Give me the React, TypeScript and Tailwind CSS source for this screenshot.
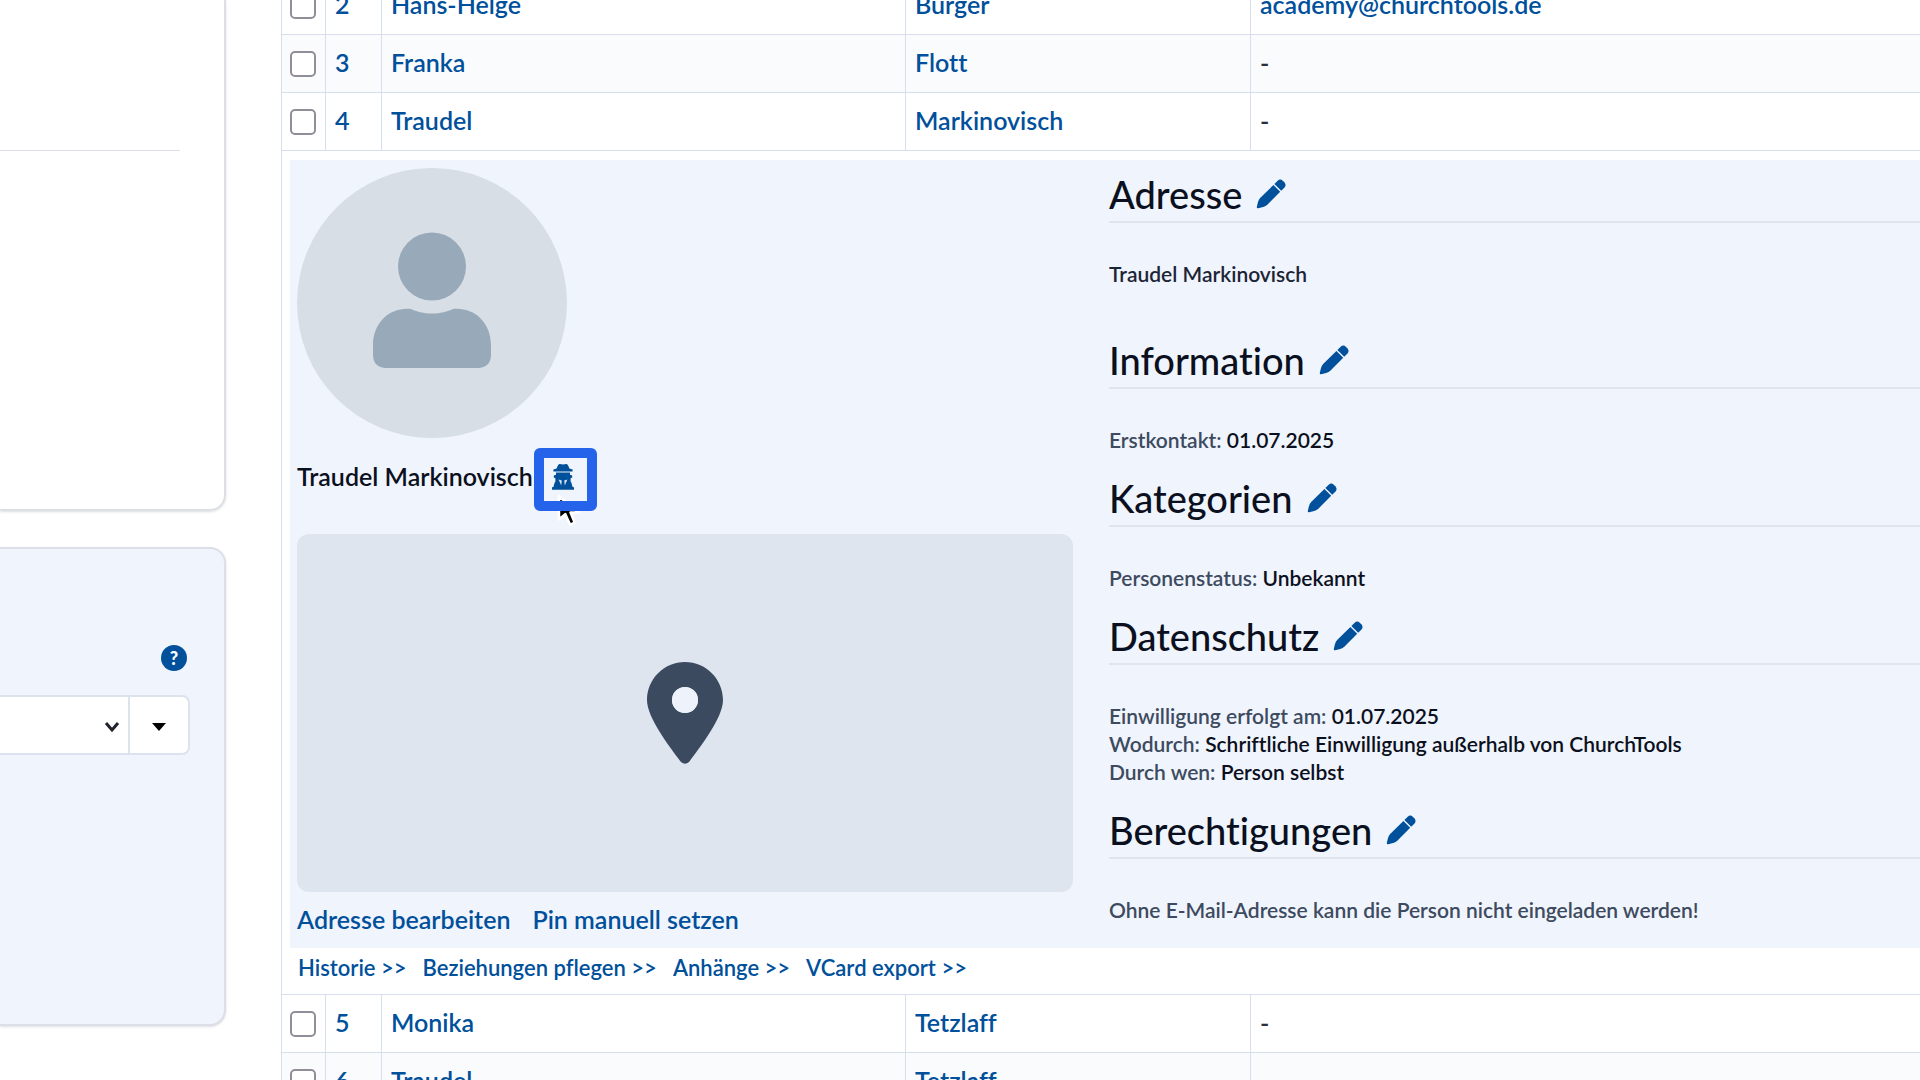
import type { ReactNode } from 'react'

type Person = { nr: number; first: string; last: string; mail: string; striped?: boolean }

const before: Person[] = [
  { nr: 2, first: 'Hans-Helge', last: 'Burger', mail: 'academy@churchtools.de' },
  { nr: 3, first: 'Franka', last: 'Flott', mail: '-', striped: true },
  { nr: 4, first: 'Traudel', last: 'Markinovisch', mail: '-' },
]

const after: Person[] = [
  { nr: 5, first: 'Monika', last: 'Tetzlaff', mail: '-' },
  { nr: 6, first: 'Traudel', last: 'Tetzlaff', mail: '-', striped: true },
]

function PencilIcon() {
  return (
    <svg viewBox="0 0 30 30" className="size-[30px]" fill="#00509b" aria-hidden="true">
      <path d="M17.4 6 24.2 12.800 11.800 25.300Q9.800 27.200 7.200 28L2.200 29.300Q.6 29.600.8 28L2 23Q2.600 20.600 4.400 18.800Z" />
      <path d="M18.400 5 21.700 1.700Q24.300-.6 27 1.900L28.300 3.200Q30.700 5.900 28.500 8.400L25.200 11.800Z" />
    </svg>
  )
}

function SpyIcon() {
  return (
    <svg viewBox="0 0 24 28" className="h-7 w-6" aria-hidden="true">
      <g fill="#00509b">
        <path d="M8 1.2C9 .6 10.600 1.500 12 1.500S15 .6 16 1.200C17.200 1.900 18 4.400 18.400 5.600L21.600 6.600V8.400H2.400V6.600L5.600 5.600C6 4.400 6.800 1.900 8 1.200Z" />
        <path d="M5 9.400H19V11.800L21.200 12.600V14.600L19.600 15.200V18.600C20.600 20 21 21.600 21.300 23.400L23 24.600V26.800H1V24.600L2.700 23.400C3 21.600 3.400 20 4.400 18.600V15.200L2.800 14.600V12.600L5 11.800Z" />
      </g>
      <path d="M7.600 16.500 10.800 17.500 10.200 22.500ZM16.400 16.500 13.200 17.500 13.800 22.500Z" fill="#d5e6f8" />
    </svg>
  )
}

function Rows({ people }: { people: Person[] }) {
  return (
    <>
      {people.map((p) => (
        <tr key={p.nr} className={`h-[58px] text-[25px] leading-8 ${p.striped ? 'bg-[#fafbfd]' : 'bg-white'}`}>
          <td className="border border-[#d8dfec] pl-2">
            <input
              type="checkbox"
              aria-label={`${p.first} ${p.last}`}
              className="block size-[26px] appearance-none rounded-[5px] border-2 border-[#918e99] bg-white checked:bg-[#00509b]"
            />
          </td>
          <td className="border border-[#d8dfec] pb-[3px] pl-[9px]"><a href="#">{p.nr}</a></td>
          <td className="border border-[#d8dfec] pb-[3px] pl-[9px]"><a href="#">{p.first}</a></td>
          <td className="border border-[#d8dfec] pb-[3px] pl-[9px]"><a href="#">{p.last}</a></td>
          <td className="border border-r-0 border-[#d8dfec] pb-[3px] pl-[9px]">
            {p.mail === '-' ? <span className="text-[#2b2f3a]">-</span> : <a href="#">{p.mail}</a>}
          </td>
        </tr>
      ))}
    </>
  )
}

function Section({ title, children }: { title: string; children: ReactNode }) {
  return (
    <section>
      <h2 className="flex h-14 items-center gap-[14px] border-b-2 border-[#dfe4ee] text-[38px] font-medium text-[#0b1020]">
        {title}
        <button type="button" aria-label={`${title} bearbeiten`}>
          <PencilIcon />
        </button>
      </h2>
      <div className="pt-[37px] pb-[17px] text-[21px] leading-7 text-[#3d4a5f]">{children}</div>
    </section>
  )
}

function Field({ label, value }: { label: string; value: string }) {
  return (
    <p>
      {label}: <span className="text-[#0b1020]">{value}</span>
    </p>
  )
}

function Sidebar() {
  return (
    <aside className="flex w-[226px] shrink-0 flex-col gap-9">
      <div className="h-[511px] rounded-br-2xl border-r-2 border-b-2 border-[#dcdfe4] pr-11 shadow-sm">
        <hr className="mt-[150px] border-[#dcdfe4]" />
      </div>
      <div className="h-[479px] rounded-r-2xl border-2 border-l-0 border-[#dcdfe8] bg-[#f0f4fc] pt-24 pr-[34px] shadow-sm">
        <div className="flex justify-end">
          <button
            type="button"
            aria-label="Hilfe"
            className="mr-[3px] size-[26px] rounded-full bg-[#00509b] text-[18px] leading-[26px] font-black text-white"
          >
            ?
          </button>
        </div>
        <div className="mt-6 flex h-[60px] rounded-r-lg border-2 border-l-0 border-[#dce3ef] bg-white">
          <div className="relative flex-1">
            <select aria-label="Auswahl" className="size-full appearance-none bg-transparent">
              <option></option>
            </select>
            <svg viewBox="0 0 16 12" className="pointer-events-none absolute top-6 right-2 h-3 w-4" aria-hidden="true">
              <path d="M2 2 8 9 14 2" fill="none" stroke="#20242c" strokeWidth="3" />
            </svg>
          </div>
          <button type="button" aria-label="Mehr" className="flex w-[60px] items-center justify-center border-l-2 border-[#dce3ef]">
            <svg viewBox="0 0 14 8" className="mt-1 h-2 w-[14px]" aria-hidden="true">
              <path d="M0 0H14L7 8Z" fill="#000" />
            </svg>
          </button>
        </div>
      </div>
    </aside>
  )
}

function Detail() {
  return (
    <div className="h-[843px] pt-[9px] pl-2">
      <div className="flex h-[788px] gap-9 bg-[#f0f4fc] pl-[7px]">
        <div className="w-[776px] shrink-0 pt-2">
          <svg viewBox="0 0 270 270" className="size-[270px]" role="img" aria-label="Profilbild">
            <circle cx="135" cy="135" r="135" fill="#d7dee6" />
            <circle cx="135" cy="98.500" r="34" fill="#98a9b9" />
            <path d="M114 141C119 143.500 127 145.500 135 145.500S151 143.500 156 141C177 139 194 154 194 178V187C194 195 189 200 181 200H89C81 200 76 195 76 187V178C76 154 93 139 114 141Z" fill="#98a9b9" />
          </svg>
          <div className="mt-[10px] flex h-[63px] items-center gap-px">
            <span className="pb-[6px] text-[25px] text-[#0b1020]">Traudel Markinovisch</span>
            <button
              type="button"
              aria-label="Person simulieren"
              className="relative flex size-[63px] items-center justify-center pr-1 pb-[6px]"
            >
              <SpyIcon />
              <svg viewBox="0 0 24 34" className="absolute top-[45px] left-[22px] h-9 w-[26px]" aria-hidden="true">
                <path d="M2.500 3V25L8.500 20 13 30 17.500 28 13.500 18.500H21Z" fill="#000" stroke="#fff" strokeWidth="2.500" strokeLinejoin="round" />
              </svg>
              <span className="absolute inset-0 rounded-md border-[10px] border-[#2563eb]"></span>
            </button>
          </div>
          <div className="mt-[23px] flex h-[358px] items-center justify-center rounded-xl bg-[#dfe5ef]">
            <svg viewBox="0 0 76 102" className="h-[102px] w-[76px]" aria-hidden="true">
              <path
                fillRule="evenodd"
                d="M38 0C59 0 76 17 76 38C76 56 53 85 42.500 99.500Q38 104 33.500 99.500C23 85 0 56 0 38C0 17 17 0 38 0ZM38 25A13 13 0 1 0 38 51A13 13 0 1 0 38 25Z"
                fill="#3c4a60"
              />
              <circle cx="38" cy="38" r="13" fill="#edf2fb" />
            </svg>
          </div>
          <div className="flex h-14 items-center gap-[22px] text-[25px]">
            <a href="#">Adresse bearbeiten</a>
            <a href="#">Pin manuell setzen</a>
          </div>
        </div>
        <div className="flex-1 pt-[7px] text-nowrap">
          <Section title="Adresse">
            <p className="pb-7 text-[#1c2536]">Traudel Markinovisch</p>
          </Section>
          <Section title="Information">
            <Field label="Erstkontakt" value="01.07.2025" />
          </Section>
          <Section title="Kategorien">
            <Field label="Personenstatus" value="Unbekannt" />
          </Section>
          <Section title="Datenschutz">
            <Field label="Einwilligung erfolgt am" value="01.07.2025" />
            <Field label="Wodurch" value="Schriftliche Einwilligung außerhalb von ChurchTools" />
            <Field label="Durch wen" value="Person selbst" />
          </Section>
          <Section title="Berechtigungen">
            <p>Ohne E-Mail-Adresse kann die Person nicht eingeladen werden!</p>
          </Section>
        </div>
      </div>
      <nav className="flex h-[38px] items-center gap-4 pl-2 text-[22px]">
        <a href="#">Historie &gt;&gt;</a>
        <a href="#">Beziehungen pflegen &gt;&gt;</a>
        <a href="#">Anhänge &gt;&gt;</a>
        <a href="#">VCard export &gt;&gt;</a>
      </nav>
    </div>
  )
}

function App() {
  return (
    <div className="flex h-screen gap-[55px] overflow-hidden bg-white font-['Lato',sans-serif] font-semibold text-[#00509b] [font-variant-ligatures:none]">
      <Sidebar />
      <main className="-mt-6 min-w-0 flex-1">
        <table className="w-full table-fixed border-collapse">
          <colgroup>
            <col className="w-11" />
            <col className="w-14" />
            <col className="w-[524px]" />
            <col className="w-[345px]" />
            <col />
          </colgroup>
          <tbody>
            <Rows people={before} />
            <tr>
              <td colSpan={5} className="border border-r-0 border-[#d8dfec] p-0">
                <Detail />
              </td>
            </tr>
            <Rows people={after} />
          </tbody>
        </table>
      </main>
    </div>
  )
}

export default App
